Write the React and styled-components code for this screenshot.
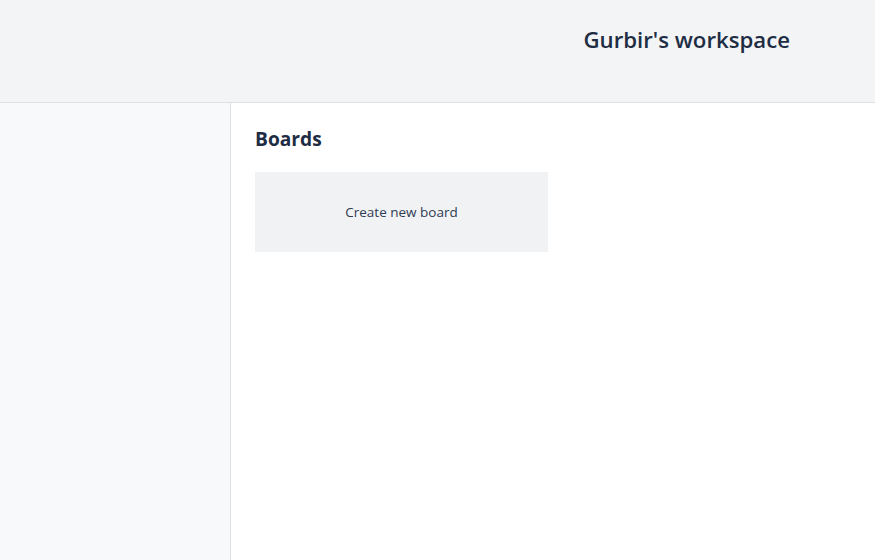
import styled, { createGlobalStyle } from 'styled-components'

const GlobalStyle = createGlobalStyle`
  html, body {
    margin: 0;
    padding: 0;
    height: 100%;
  }
  body {
    font-family: 'Open Sans', 'Noto Sans', sans-serif;
    color: #172b4d;
    background: #fff;
  }
  #root {
    height: 100%;
  }
`

const Layout = styled.div`
  display: flex;
  flex-direction: column;
  height: 100vh;
`

const Header = styled.header`
  height: 102px;
  flex-shrink: 0;
  display: flex;
  align-items: center;
  justify-content: flex-end;
  padding: 0 85px 0 0;
  background: #f3f4f6;
  border-bottom: 1px solid #dfe1e6;
`

const Workspace = styled.h1`
  margin: 0 0 23px;
  font-size: 22.2px;
  font-weight: 600;
  color: #1e2d44;
`

const Body = styled.div`
  flex: 1;
  display: flex;
  min-height: 0;
`

const Sidebar = styled.aside`
  width: 230px;
  flex-shrink: 0;
  background: #f8f9fa;
  border-right: 1px solid #dfe1e6;
`

const Main = styled.main`
  flex: 1;
  padding: 22px 24px;
`

const Title = styled.h2`
  margin: 0 0 20px;
  font-size: 19.2px;
  font-weight: 700;
  color: #1e2d44;
`

const BoardGrid = styled.div`
  display: grid;
  grid-template-columns: repeat(auto-fill, 293px);
  gap: 16px;
`

const NewBoard = styled.button`
  height: 80px;
  border: none;
  background: #f1f2f4;
  font-family: inherit;
  font-size: 13.5px;
  color: #2e3c52;
  cursor: pointer;
  &:hover {
    background: #e9ebee;
  }
`

const App = () => {
  return (
    <Layout>
      <GlobalStyle />
      <Header>
        <Workspace>Gurbir's workspace</Workspace>
      </Header>
      <Body>
        <Sidebar />
        <Main>
          <Title>Boards</Title>
          <BoardGrid>
            <NewBoard>Create new board</NewBoard>
          </BoardGrid>
        </Main>
      </Body>
    </Layout>
  )
}

export default App
